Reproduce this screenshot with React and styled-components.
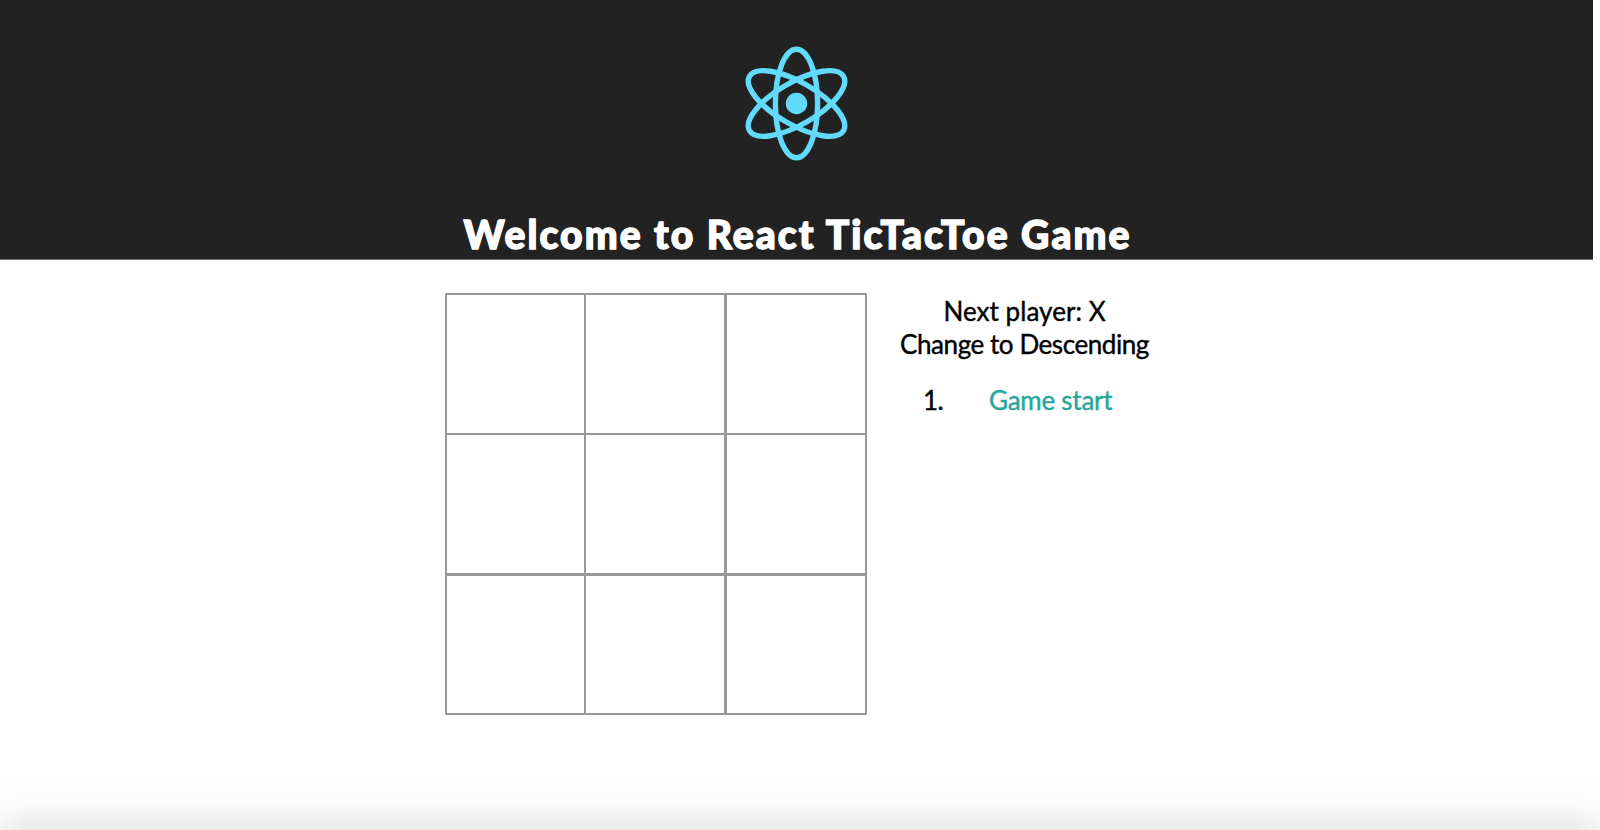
import React from "react";
import styled, { createGlobalStyle } from "styled-components";

const GlobalStyle = createGlobalStyle`
  body {
    margin: 0;
    background: #fff;
    overflow: hidden;
    font-family: Lato, "Liberation Sans", sans-serif;
  }
`;

const Page = styled.div`
  display: flex;
  flex-direction: column;
  height: 830px;
`;

const Header = styled.header`
  display: flex;
  flex-direction: column;
  align-items: center;
  box-sizing: border-box;
  width: 1593px;
  height: 260px;
  padding-top: 43px;
  background: #222;
  border-bottom: 1px solid #777;
`;

const Logo = styled.svg`
  display: block;
  width: 121px;
  height: 121px;
  fill: none;
  stroke: #61dafb;
  stroke-width: 5.4;
`;

const Title = styled.h1`
  margin: 46px 0 0;
  color: #fff;
  font-size: 39px;
  font-weight: 900;
  line-height: 48px;
  letter-spacing: 2.1px;
  text-indent: 2px;
  white-space: nowrap;
  -webkit-text-stroke: 1.4px currentColor;
`;

const Game = styled.main`
  display: flex;
  flex: 1;
  align-items: flex-start;
  gap: 27px;
  padding: 33px 0 0 445px;
`;

const Board = styled.div`
  display: grid;
  box-sizing: border-box;
  grid-template-columns: 139px 141px 140px;
  grid-template-rows: 140px 141px 139px;
  width: 422px;
  border: solid #999;
  border-width: 2px 0 0 2px;
`;

const Square = styled.button`
  padding: 0;
  background: #fff;
  border: solid #999;
  border-width: 0 ${(p) => (p.$col === 1 ? 3 : 2)}px ${(p) => (p.$row === 1 ? 3 : 2)}px 0;
`;

const Info = styled.aside`
  display: flex;
  flex-direction: column;
  align-items: center;
  box-sizing: border-box;
  width: 261px;
  padding-top: 2px;
  font-size: 26px;
  line-height: 32.5px;
  color: #000;
`;

const Line = styled.div`
  letter-spacing: ${(p) => p.$spacing}px;
  white-space: nowrap;
  -webkit-text-stroke: 0.4px currentColor;
`;

const Moves = styled.div`
  display: flex;
  box-sizing: border-box;
  width: 100%;
  padding: 24px 0 0 29px;
`;

const MoveNumber = styled(Line)`
  width: 66px;
`;

const MoveLink = styled(Line)`
  color: #26a69a;
`;

const BottomShade = styled.footer`
  height: 60px;
  background: linear-gradient(#fff, #fdfdfd 22px, #fafafa 36px, #f3f3f3 45px, #ebebeb);
  mask-image: linear-gradient(90deg, rgba(0, 0, 0, 0.5), #000 24px, #000 1574px, rgba(0, 0, 0, 0.5));
`;

const ORBIT =
  "M-54.3 0C-54.3 -11.5 -31 -21.1 0 -21.1S54.3 -11.5 54.3 0S31 21.1 0 21.1S-54.3 11.5 -54.3 0Z";

export default function App() {
  return (
    <Page>
      <GlobalStyle />
      <Header>
        <Logo viewBox="-60.5 -60.5 121 121">
          {[30, 90, 150].map((angle) => (
            <path key={angle} d={ORBIT} transform={`rotate(${angle})`} />
          ))}
          <circle r="10.7" fill="#61dafb" stroke="none" />
        </Logo>
        <Title>Welcome to React TicTacToe Game</Title>
      </Header>
      <Game>
        <Board>
          {[0, 1, 2].map((row) =>
            [0, 1, 2].map((col) => <Square key={`${row}${col}`} $row={row} $col={col} />)
          )}
        </Board>
        <Info>
          <Line $spacing={0.05}>Next player: X</Line>
          <Line $spacing={-0.43}>Change to Descending</Line>
          <Moves>
            <MoveNumber $spacing={-0.5}>1.</MoveNumber>
            <MoveLink $spacing={-0.25}>Game start</MoveLink>
          </Moves>
        </Info>
      </Game>
      <BottomShade />
    </Page>
  );
}
